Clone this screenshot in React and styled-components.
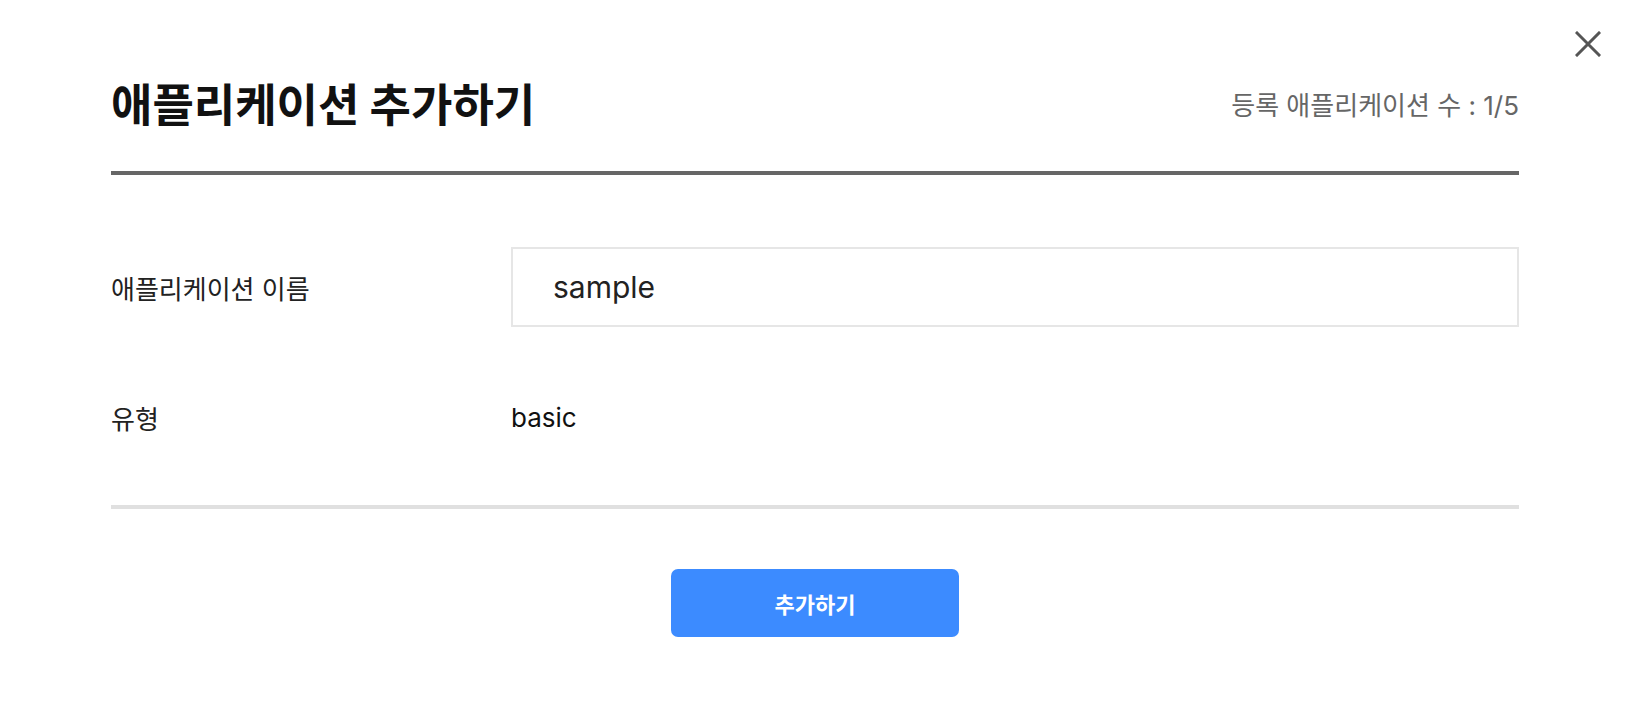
import React from "react";
import styled, { createGlobalStyle } from "styled-components";

const Global = createGlobalStyle`
  html, body { margin: 0; padding: 0; background: #fff; }
  body { font-family: Inter, "Noto Sans CJK KR", sans-serif; }
  * { box-sizing: border-box; }
`;

const Modal = styled.div`
  position: relative;
  width: 1634px;
  height: 708px;
  padding: 0 115px 0 111px;
  background: #fff;
`;

const CloseButton = styled.button`
  position: absolute;
  top: 31px;
  right: 33px;
  width: 26px;
  height: 26px;
  padding: 0;
  border: 0;
  background: transparent;
  cursor: pointer;
  display: flex;
  align-items: center;
  justify-content: center;
`;

const Header = styled.header`
  display: flex;
  align-items: center;
  justify-content: space-between;
  padding: 74px 0 39px;
  border-bottom: 4px solid #666;
`;

const Title = styled.h1`
  margin: 0;
  font-family: "Noto Sans CJK KR", sans-serif;
  font-size: 45px;
  line-height: 58px;
  font-weight: 700;
  color: #111;
`;

const Count = styled.span`
  font-family: Inter, "Noto Sans CJK KR", sans-serif;
  font-size: 26px;
  color: #666;
`;

const Form = styled.div`
  display: flex;
  flex-direction: column;
  gap: 50px;
  padding-top: 72px;
  padding-bottom: 48px;
  border-bottom: 4px solid #e0e0e0;
`;

const Row = styled.div`
  display: grid;
  grid-template-columns: 400px 1fr;
  align-items: center;
  height: 80px;
`;

const Label = styled.span`
  font-family: Inter, "Noto Sans CJK KR", sans-serif;
  font-size: 26px;
  color: #222;
`;

const Input = styled.input`
  width: 100%;
  height: 80px;
  border: 2px solid #e6e6e6;
  padding: 0 40px;
  font-family: Inter, sans-serif;
  font-size: 30px;
  color: #222;
  outline: none;
  background: #fff;
`;

const Value = styled.span`
  font-family: Inter, sans-serif;
  font-size: 26px;
  color: #111;
`;

const Footer = styled.div`
  display: flex;
  justify-content: center;
  padding-top: 60px;
`;

const SubmitButton = styled.button`
  width: 288px;
  height: 68px;
  border: 0;
  border-radius: 7px;
  background: #3c8bff;
  color: #fff;
  font-family: "Noto Sans CJK KR", sans-serif;
  font-size: 22px;
  font-weight: 700;
  cursor: pointer;
`;

export default function App() {
  return (
    <>
      <Global />
      <Modal>
        <CloseButton aria-label="닫기">
          <svg width="26" height="26" viewBox="0 0 26 26">
            <path d="M2 2 L24 24 M24 2 L2 24" stroke="#555" strokeWidth="3" strokeLinecap="square" />
          </svg>
        </CloseButton>
        <Header>
          <Title>애플리케이션 추가하기</Title>
          <Count>등록 애플리케이션 수 : 1/5</Count>
        </Header>
        <Form>
          <Row>
            <Label>애플리케이션 이름</Label>
            <Input defaultValue="sample" />
          </Row>
          <Row>
            <Label>유형</Label>
            <Value>basic</Value>
          </Row>
        </Form>
        <Footer>
          <SubmitButton>추가하기</SubmitButton>
        </Footer>
      </Modal>
    </>
  );
}
